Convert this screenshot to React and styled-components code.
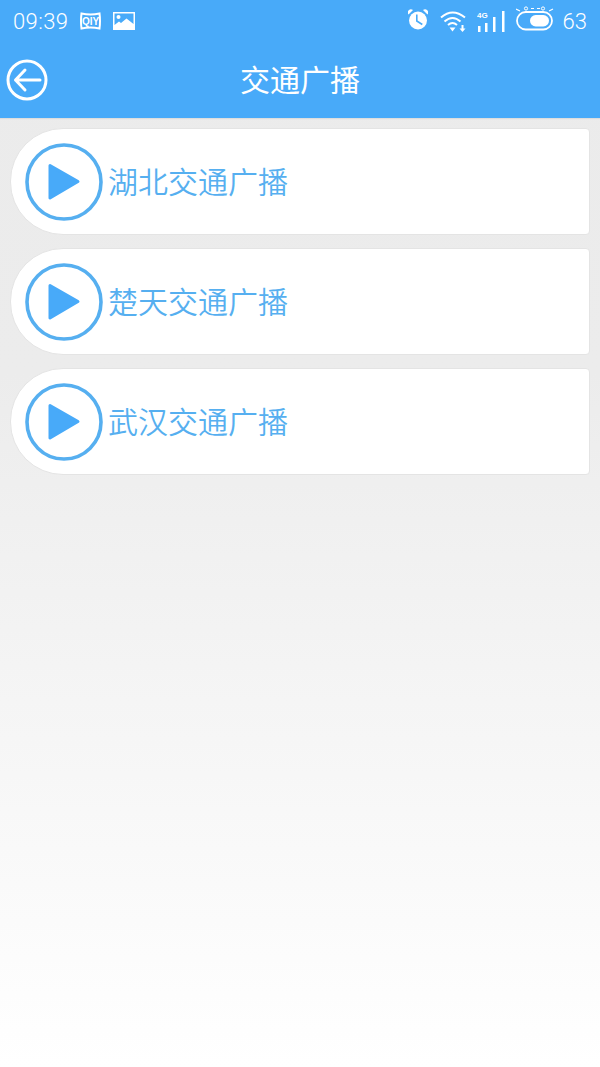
import React from 'react';
import styled, { createGlobalStyle } from 'styled-components';

const GlobalStyle = createGlobalStyle`
  html, body {
    margin: 0;
    padding: 0;
  }
  body {
    font-family: "Liberation Sans", "Noto Sans CJK SC", sans-serif;
  }
`;

const STATIONS = ['湖北交通广播', '楚天交通广播', '武汉交通广播'];

function App() {
  return (
    <Page>
      <GlobalStyle />
      <Header>
        <StatusBar>
          <StatusLeft>
            <Clock>09:39</Clock>
            <QiyiIcon />
            <PictureIcon />
          </StatusLeft>
          <StatusRight>
            <AlarmIcon />
            <WifiIcon />
            <SignalIcon />
            <BatteryIcon />
            <BatteryText>63</BatteryText>
          </StatusRight>
        </StatusBar>
        <TitleBar>
          <BackBtn>
            <BackIcon />
          </BackBtn>
          <Title>交通广播</Title>
        </TitleBar>
      </Header>
      <List>
        {STATIONS.map((name) => (
          <Card key={name}>
            <PlayIcon />
            <StationName>{name}</StationName>
          </Card>
        ))}
      </List>
    </Page>
  );
}

export default App;

const QiyiIcon = () => (
  <Glyph width="21" height="18" viewBox="0 0 21 18">
    <path d="M1.500 1.500 Q10.500 3.500 19.500 1.500 Q20.500 9 19.500 16.500 Q10.500 14.500 1.500 16.500 Q0.500 9 1.500 1.500Z" fill="none" stroke="#fff" strokeWidth="2" />
    <text x="10.500" y="13" textAnchor="middle" fontSize="10" fontWeight="700" fill="#fff" fontFamily="Liberation Sans, sans-serif">QIY</text>
  </Glyph>
);

const PictureIcon = () => (
  <Glyph width="22" height="18" viewBox="0 0 22 18">
    <path fillRule="evenodd" fill="#fff" d="M0 0h22v18H0z M1.500 1.500v11.500l4.500-3.500 2 1.500 5.500-4.500 7 5.500V1.500z" />
    <circle cx="5.500" cy="5" r="2" fill="#fff" />
  </Glyph>
);

const AlarmIcon = () => (
  <Glyph $lift={3} $space={1} width="20" height="21" viewBox="0 0 20 21">
    <circle cx="10" cy="11.500" r="9" fill="#fff" />
    <path d="M0.500 5.500 L5 1 A3.200 3.200 0 0 0 0.500 5.500Z M19.500 5.500 L15 1 A3.200 3.200 0 0 1 19.500 5.500Z" fill="#fff" />
    <path d="M8.800 5.500v6.500l5.500 3.500" fill="none" stroke="#48aaf9" strokeWidth="1.600" />
  </Glyph>
);

const WifiIcon = () => (
  <Glyph width="26" height="23" viewBox="0 0 26 23">
    <path d="M1 7.500 Q12.500 -2.500 25 7.500 M4.500 11.500 Q12.500 4.500 20.500 11.500 M8 15 Q12.500 11 17 15" fill="none" stroke="#fff" strokeWidth="2" />
    <path d="M9.500 17.500h6l-3 4z" fill="#fff" />
    <path d="M22.500 15v4" stroke="#fff" strokeWidth="2" />
    <path d="M19.500 18.500h6l-3 3.500z" fill="#fff" />
  </Glyph>
);

const SignalIcon = () => (
  <Glyph $lift={1} width="28" height="22" viewBox="0 0 28 22">
    <rect x="1" y="16" width="2.500" height="6" fill="#fff" />
    <rect x="8" y="13" width="2.500" height="9" fill="#fff" />
    <rect x="16" y="7" width="2.500" height="15" fill="#fff" />
    <rect x="25" y="1" width="2.500" height="21" fill="#fff" />
    <text x="0" y="7.500" fontSize="8" fontWeight="700" fill="#fff" fontFamily="Liberation Sans, sans-serif">4G</text>
  </Glyph>
);

const BatteryIcon = () => (
  <Glyph $lift={6} width="38" height="25" viewBox="0 0 38 25">
    <rect x="1" y="6" width="35" height="17.500" rx="8.700" fill="none" stroke="#fff" strokeWidth="1.800" />
    <rect x="14" y="9" width="19" height="11.500" rx="5.700" fill="#fff" />
    <path d="M15 2.500h3M21 2.500h3M0 3l4 2M37 3l-4 2" stroke="#fff" strokeWidth="1.200" />
    <circle cx="10" cy="2.500" r="1.600" fill="none" stroke="#fff" />
    <circle cx="27" cy="2.500" r="1.600" fill="none" stroke="#fff" />
  </Glyph>
);

const BackIcon = () => (
  <svg width="42" height="42" viewBox="0 0 42 42">
    <circle cx="21" cy="21" r="19" fill="none" stroke="#fff" strokeWidth="3" />
    <path d="M34 21H9.500M19 11 9.500 21 19 31" fill="none" stroke="#fff" strokeWidth="3" strokeLinecap="round" strokeLinejoin="round" />
  </svg>
);

const PlayIcon = () => (
  <PlaySvg width="78" height="78" viewBox="0 0 78 78">
    <circle cx="39" cy="39" r="37" fill="none" stroke="#56aff0" strokeWidth="3.600" />
    <path d="M25 22.500 L53 38.500 L25 55Z" fill="#48aaf9" stroke="#48aaf9" strokeWidth="3" strokeLinejoin="round" />
  </PlaySvg>
);

const Page = styled.div`
  width: 600px;
  height: 1067px;
  overflow: hidden;
  background: linear-gradient(180deg, #ebebeb 0%, #ececec 35%, #ffffff 100%);
`;

const Header = styled.header`
  background: #48aaf9;
  height: 118px;
  box-shadow: 0 1px 1px rgba(0, 0, 0, 0.06);
`;

const StatusBar = styled.div`
  display: flex;
  justify-content: space-between;
  align-items: center;
  height: 42px;
  padding: 0 13px;
  color: #fff;
`;

const StatusLeft = styled.div`
  display: flex;
  align-items: center;
  gap: 12px;
`;

const StatusRight = styled.div`
  display: flex;
  align-items: center;
  gap: 11px;
`;

const Clock = styled.span`
  font-family: "Roboto", "Liberation Sans", sans-serif;
  font-size: 22px;
  font-weight: 300;
  letter-spacing: 0.4px;
`;

const BatteryText = styled.span`
  margin-left: -2px;
  font-family: "Roboto", "Liberation Sans", sans-serif;
  font-size: 22px;
  font-weight: 300;
`;

const Glyph = styled.svg`
  display: block;
  flex: none;
  margin-bottom: ${({ $lift }) => $lift || 0}px;
  margin-right: ${({ $space }) => $space || 0}px;
`;

const TitleBar = styled.div`
  position: relative;
  box-sizing: border-box;
  height: 76px;
  padding-bottom: 4px;
  display: flex;
  align-items: center;
  justify-content: center;
`;

const BackBtn = styled.div`
  position: absolute;
  left: 6px;
  top: 17px;
  width: 42px;
  height: 42px;
`;

const Title = styled.h1`
  margin: 0;
  color: #fff;
  font-size: 30px;
  font-weight: 400;
  font-family: "Noto Sans CJK SC", sans-serif;
`;

const List = styled.main`
  display: flex;
  flex-direction: column;
  gap: 13px;
  padding: 10px 10px 0 10px;
`;

const Card = styled.div`
  box-sizing: border-box;
  height: 107px;
  display: flex;
  align-items: center;
  padding-left: 14px;
  background: #fff;
  border: 1px solid #e4e4e4;
  border-radius: 53px 4px 4px 53px;
`;

const PlaySvg = styled.svg`
  display: block;
  flex: none;
`;

const StationName = styled.span`
  margin: 0 0 3px 5px;
  color: #56aff0;
  font-size: 30px;
  font-weight: 350;
  font-family: "Noto Sans CJK SC", sans-serif;
`;
